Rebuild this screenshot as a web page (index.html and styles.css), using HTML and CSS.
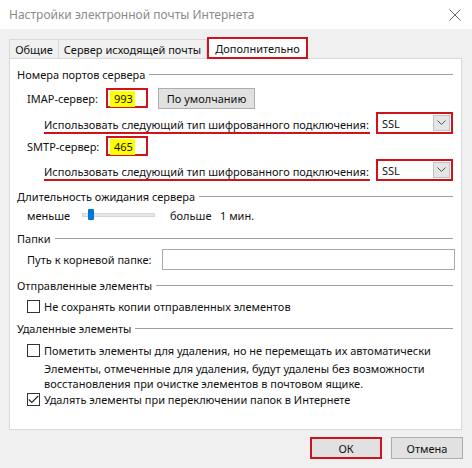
FILE: index.html
```html
<!DOCTYPE html>
<html lang="ru">
<head>
  <meta charset="UTF-8" />
  <title>Настройки электронной почты Интернета</title>
  <link rel="stylesheet" href="styles.css">
</head>
<body>

<div class="dialog">
  <div class="titlebar">
    <span class="title">Настройки электронной почты Интернета</span>
    <svg class="close" width="12" height="12" viewBox="0 0 12 12">
      <path d="M0.5 0.5 L11.5 11.5 M11.5 0.5 L0.5 11.5" stroke="#666" stroke-width="1" fill="none"/>
    </svg>
  </div>

  <div class="tabs">
    <div class="tab t1">Общие</div>
    <div class="tab t2">Сервер исходящей почты</div>
    <div class="tab active marked">Дополнительно</div>
  </div>

  <div class="panel">
    <div class="group-title g1">Номера портов сервера</div>
    <div class="row port-row r-imap">
      <span class="port-label">IMAP-сервер:</span>
      <div class="port-input marked"><span class="hl">993</span></div>
      <button class="btn default-btn">По умолчанию</button>
    </div>
    <div class="row enc-row r-enc1">
      <span class="enc-label">Использовать следующий тип шифрованного подключения:</span>
      <div class="select marked"><span>SSL</span><span class="arrow"><svg width="9" height="6" viewBox="0 0 9 6"><path d="M0.5 0.5 L4.5 4.5 L8.5 0.5" stroke="#555" fill="none"/></svg></span></div>
    </div>
    <div class="row port-row r-smtp">
      <span class="port-label">SMTP-сервер:</span>
      <div class="port-input marked"><span class="hl">465</span></div>
    </div>
    <div class="row enc-row r-enc2">
      <span class="enc-label">Использовать следующий тип шифрованного подключения:</span>
      <div class="select marked"><span>SSL</span><span class="arrow"><svg width="9" height="6" viewBox="0 0 9 6"><path d="M0.5 0.5 L4.5 4.5 L8.5 0.5" stroke="#555" fill="none"/></svg></span></div>
    </div>

    <div class="group-title g2">Длительность ожидания сервера</div>
    <div class="row slider-row">
      <span class="less">меньше</span>
      <div class="track"><span class="thumb"></span></div>
      <span class="more">больше</span>
      <span class="value">1 мин.</span>
    </div>

    <div class="group-title g3">Папки</div>
    <div class="row path-row">
      <span class="path-label">Путь к корневой папке:</span>
      <div class="path-input"></div>
    </div>

    <div class="group-title g4">Отправленные элементы</div>
    <label class="row check-row c1"><span class="box"></span>Не сохранять копии отправленных элементов</label>

    <div class="group-title g5">Удаленные элементы</div>
    <label class="row check-row c2"><span class="box"></span>Пометить элементы для удаления, но не перемещать их автоматически</label>
    <p class="note">Элементы, отмеченные для удаления, будут удалены без возможности<br>восстановления при очистке элементов в почтовом ящике.</p>
    <label class="row check-row c3"><span class="box checked"><svg width="11" height="9" viewBox="0 0 11 9"><path d="M0.8 4.5 L3.8 7.5 L10.2 1" stroke="#222" stroke-width="1.1" fill="none"/></svg></span>Удалять элементы при переключении папок в Интернете</label>
  </div>

  <div class="footer">
    <button class="btn ok marked">ОК</button>
    <button class="btn cancel">Отмена</button>
  </div>
</div>

</body>
</html>
```

FILE: styles.css
```css
* {
  margin: 0; padding: 0; box-sizing: border-box;
}
body {
  background: #f0f0f0;
  font-family: 'Noto Sans', 'Open Sans', sans-serif;
  font-size: 11px;
  color: #111;
  width: 472px;
  height: 468px;
  overflow: hidden;
}
.dialog {
  width: 472px;
  height: 468px;
}
.titlebar {
  height: 29px;
  background: #fff;
  display: flex;
  align-items: center;
  justify-content: space-between;
  padding: 0 11px 0 9px;
}
.title {
  font-size: 12px;
  color: #8a8a8a;
}
.marked {
  border: 2px solid #d0121b !important;
}

/* Tabs */
.tabs {
  display: flex;
  align-items: flex-end;
  height: 29px;
  padding-left: 9px;
  position: relative;
  z-index: 1;
}
.tab {
  height: 19px;
  border: 1px solid #d9d9d9;
  border-bottom: none;
  display: flex;
  align-items: center;
  justify-content: center;
  margin-right: -1px;
  white-space: nowrap;
}
.t1 { width: 50px; }
.t2 { width: 149px; }
.tab.active {
  width: 101px;
  height: 22px;
  background: #fff;
  margin-left: 1px;
  margin-bottom: -1px;
}

/* Panel */
.panel {
  margin: 0 10px 0 9px;
  height: 372px;
  background: #fff;
  border: 1px solid #d9d9d9;
  padding: 6px 8px 0 7px;
}
.group-title {
  display: flex;
  align-items: center;
  height: 18px;
  white-space: nowrap;
}
.group-title::after {
  content: '';
  flex: 1;
  height: 1px;
  background: #a0a0a0;
  margin-left: 4px;
}
.row {
  display: flex;
  align-items: center;
  padding-left: 10px;
  white-space: nowrap;
}
.port-row { height: 20px; }
.port-label { width: 79px; flex-shrink: 0; }
.port-input {
  width: 42px;
  height: 20px;
  padding: 1px 0 0 2px;
  display: flex;
  align-items: center;
}
.hl {
  background: #ffff00;
  padding: 0 4px;
  line-height: 16px;
  width: 25px;
}
.default-btn {
  margin-left: 10px;
  width: 97px;
  height: 21px;
}
.r-imap { margin-top: 5px; }
.r-enc1 { margin-top: 4px; }
.r-smtp { margin-top: 2px; }
.r-enc2 { margin-top: 3px; }
.enc-row {
  height: 22px;
  padding-left: 27px;
}
.enc-label {
  border-bottom: 2px solid #d0121b;
  line-height: 15px;
  margin-top: 4px;
  padding-right: 1px;
}
.select {
  margin-left: auto;
  flex-shrink: 0;
  width: 77px;
  height: 22px;
  display: flex;
  align-items: center;
  justify-content: space-between;
  padding: 0 1px 0 4px;
}
.arrow {
  width: 17px;
  height: 16px;
  background: #e5e5e5;
  border: 1px solid #c4c4c4;
  display: flex;
  align-items: center;
  justify-content: center;
}

.g2 { margin-top: 6px; }
.slider-row { height: 18px; margin-top: 1px; }
.less { width: 55px; }
.track {
  position: relative;
  width: 73px;
  height: 4px;
  background: #e7e7e7;
  border: 1px solid #d6d6d6;
}
.thumb {
  position: absolute;
  left: 5px;
  top: -5px;
  width: 6px;
  height: 11px;
  background: #0078d7;
  border-radius: 1px;
}
.more { margin-left: 15px; width: 50px; }

.g3 { margin-top: 5px; }
.path-row { height: 21px; margin-top: 2px; }
.path-label { width: 135px; flex-shrink: 0; }
.path-input {
  flex: 1;
  height: 21px;
  border: 1px solid #a9a9a9;
  margin-right: -2px;
}

.g4 { margin-top: 6px; }
.check-row { height: 18px; }
.c1 { margin-top: 3px; }
.g5 { margin-top: 4px; }
.c2 { margin-top: 4px; }
.c3 { margin-top: -1px; }
.box {
  flex-shrink: 0;
  width: 13px;
  height: 13px;
  border: 1px solid #333;
  margin-right: 4px;
  display: flex;
  align-items: center;
  justify-content: center;
}
.note {
  padding-left: 27px;
  line-height: 15px;
  margin-top: 2px;
  white-space: nowrap;
}

/* Footer */
.footer {
  display: flex;
  justify-content: flex-end;
  gap: 9px;
  padding: 7px 9px 0 0;
}
.btn {
  font-family: inherit;
  font-size: 11px;
  color: #111;
  background: #e1e1e1;
  border: 1px solid #adadad;
}
.ok, .cancel {
  width: 72px;
  height: 22px;
}
```
